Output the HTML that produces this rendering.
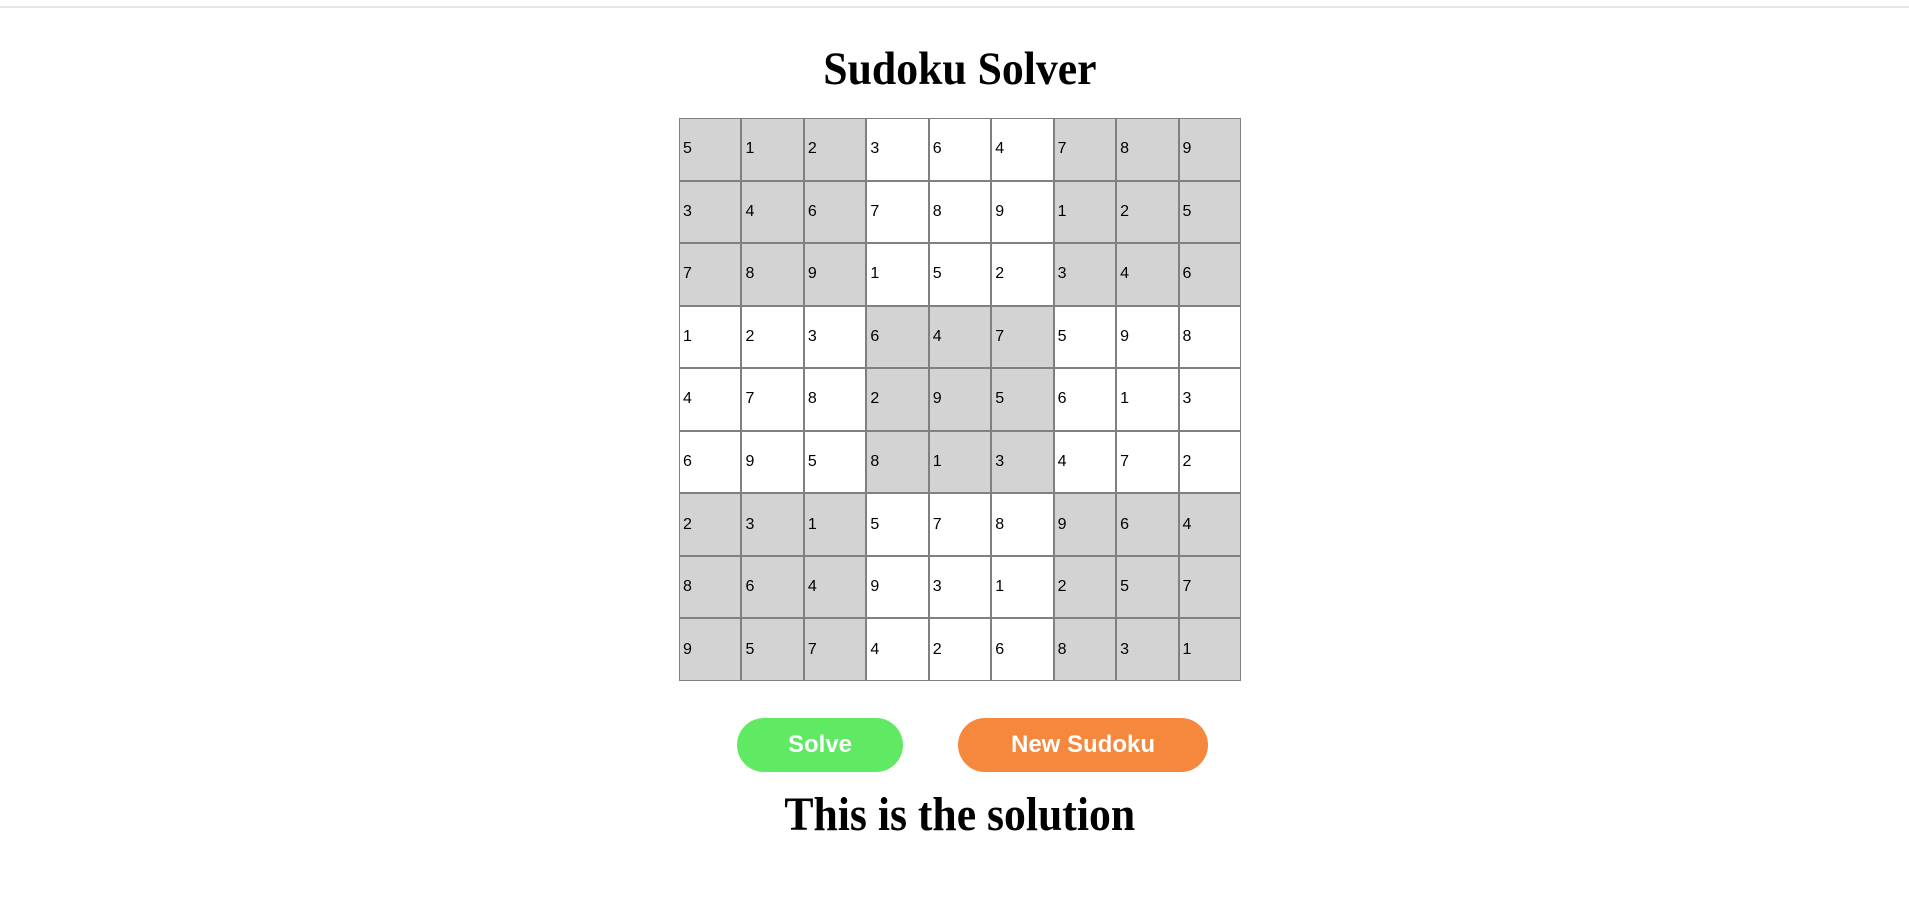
<!DOCTYPE html>
<html><head><meta charset="utf-8"><style>
html,body{margin:0;padding:0;background:#fff;width:1909px;height:904px;overflow:hidden;position:relative}
.topline{position:absolute;left:0;top:6px;width:1909px;height:2px;background:#e6e6e6}
.t{position:absolute;left:0;width:1920px;text-align:center;font-family:"Liberation Serif",serif;font-weight:bold;color:#000;white-space:nowrap}
.t span{display:inline-block}
table{position:absolute;left:679px;top:118px;width:562px;height:563px;border-collapse:separate;border-spacing:0;table-layout:fixed}
td{border:1px solid #808080;padding:0 0 0 3px;font-family:"Liberation Sans",sans-serif;font-size:16px;color:#000;vertical-align:middle;background:#fff}
td.g{background:#d3d3d3}
.btn{position:absolute;top:718px;height:54px;border-radius:27px;color:#fff;font-family:"Liberation Sans",sans-serif;font-weight:bold;font-size:24px;line-height:54px;text-align:center}
</style></head><body>
<div class="topline"></div>
<div class="t" style="top:41px;font-size:47px;line-height:56px"><span style="transform:scaleX(0.93)">Sudoku Solver</span></div>
<table id="g"></table>
<div class="btn" style="left:737px;width:166px;background:#60e962">Solve</div>
<div class="btn" style="left:958px;width:250px;background:#f5883d">New Sudoku</div>
<div class="t" style="top:787px;font-size:48px;line-height:56px"><span style="transform:scaleX(0.91)">This is the solution</span></div>
<script>
var d=["512364789","346789125","789152346","123647598","478295613","695813472","231578964","864931257","957426831"];
var h="";
for(var r=0;r<9;r++){h+="<tr>";for(var c=0;c<9;c++){var br=Math.floor(r/3),bc=Math.floor(c/3);var g=((br+bc)%2==0);h+='<td class="'+(g?'g':'')+'">'+d[r][c]+'</td>';}h+="</tr>";}
document.getElementById("g").innerHTML=h;
</script>
</body></html>
